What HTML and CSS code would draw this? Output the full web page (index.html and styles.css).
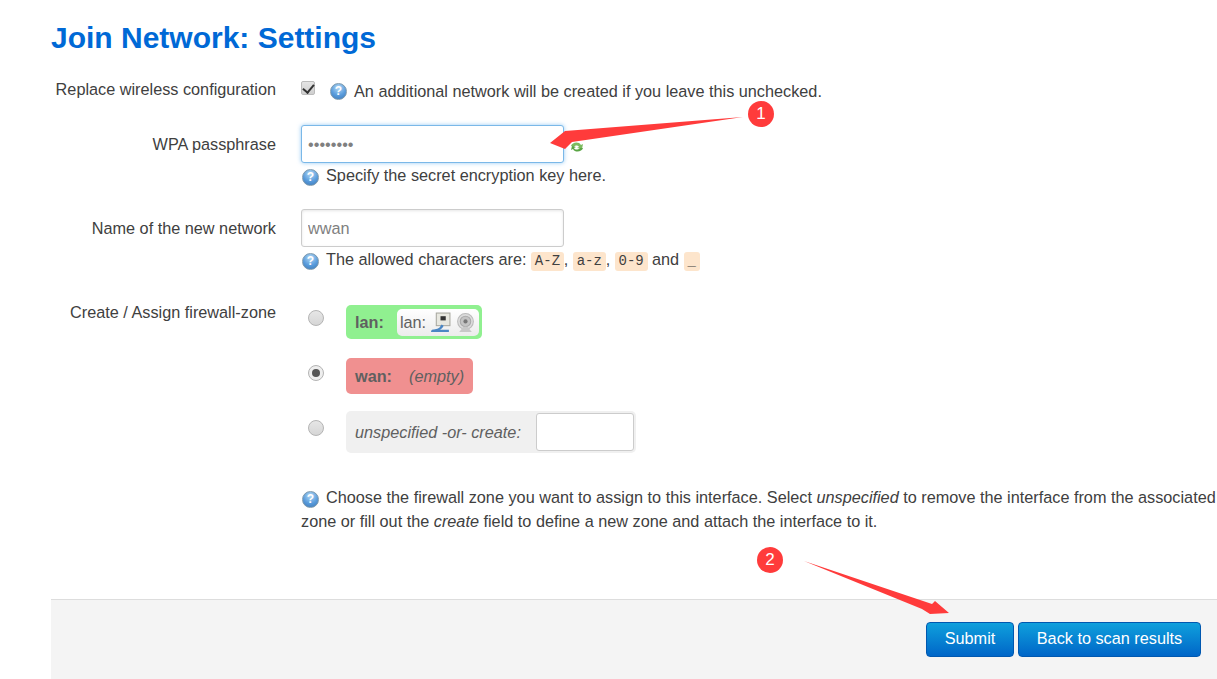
FILE: index.html
```html
<!DOCTYPE html>
<html lang="en">

<head>
    <meta charset="UTF-8">
    <title>Join Network: Settings</title>
    <link rel="stylesheet" href="styles.css">
</head>

<body>
    <div class="page">
        <h1>Join Network: Settings</h1>

        <div class="row row-replace">
            <label>Replace wireless configuration</label>
            <div class="field">
                <div class="inline-help">
                    <span class="checkbox"></span>
                    <span class="help-icon help-gap">?</span>
                    An additional network will be created if you leave this unchecked.
                </div>
            </div>
        </div>

        <div class="row row-pass">
            <label class="label-input">WPA passphrase</label>
            <div class="field">
                <div class="input-line">
                    <input class="text-input focused" type="text" value="••••••••">
                    <!-- reload icon, mostly behind the arrow -->
                    <svg class="reload" viewBox="0 0 14 12">
                        <path d="M1 5c1-4 8-5 10-1l2-1-1 5-5-1 2-1C8 4 5 4 4 6z" fill="#7dbb5f"/>
                        <path d="M13 7c-1 4-8 5-10 1l-2 1 1-4 4 1-2 1c1 2 4 2 6 0z" fill="#5aa544"/>
                    </svg>
                </div>
                <div class="help"><span class="help-icon">?</span>Specify the secret encryption key here.</div>
            </div>
        </div>

        <div class="row row-name">
            <label class="label-input">Name of the new network</label>
            <div class="field">
                <input class="text-input" type="text" value="wwan">
                <div class="help"><span class="help-icon">?</span>The allowed characters are: <code>A-Z</code>, <code>a-z</code>, <code>0-9</code> and <code>_</code></div>
            </div>
        </div>

        <div class="row row-zone">
            <label>Create / Assign firewall-zone</label>
            <div class="field zone-field">
                <div class="zone-line">
                    <span class="radio"></span>
                    <div class="zone zone-lan">
                        <strong>lan:</strong>
                        <span class="iface">lan:
                            <svg class="iface-icon" viewBox="0 0 20 20">
                                <rect x="6" y="1" width="13" height="12" fill="#e8e8e0" stroke="#a8a8a0"/>
                                <rect x="10" y="4" width="5" height="4" fill="#333"/>
                                <path d="M1 19c0-3 3-2 6-3 3-1 3-3 4-4l2 1c-1 2-2 3-4 4l9 0v2z" fill="#4a86c4"/>
                            </svg>
                            <svg class="iface-icon" viewBox="0 0 20 20">
                                <circle cx="10" cy="9" r="7.500" fill="#dcdcdc" stroke="#bbb"/>
                                <circle cx="10" cy="9" r="5" fill="#c4c4c4" stroke="#aaa"/>
                                <circle cx="10" cy="9" r="2" fill="#777"/>
                                <path d="M4 19l4-5h4l4 5z" fill="#c8c8c8"/>
                            </svg>
                        </span>
                    </div>
                </div>
                <div class="zone-line">
                    <span class="radio radio-on"></span>
                    <div class="zone zone-wan">
                        <strong>wan:</strong>
                        <em>(empty)</em>
                    </div>
                </div>
                <div class="zone-line zone-line-new">
                    <span class="radio radio-new"></span>
                    <div class="zone zone-new">
                        <em>unspecified -or- create:</em>
                        <input class="zone-input" type="text">
                    </div>
                </div>
                <div class="help zone-help"><span class="help-icon">?</span>Choose the firewall zone you want to assign to this interface. Select <em>unspecified</em> to remove the interface from the associated zone or fill out the <em>create</em> field to define a new zone and attach the interface to it.</div>
            </div>
        </div>

        <div class="actions">
            <button class="btn btn-submit">Submit</button>
            <button class="btn btn-back">Back to scan results</button>
        </div>
    </div>

    <!-- red annotations drawn on top of the screenshot -->
    <svg class="arrows" viewBox="0 0 1217 679">
        <polygon points="743,117 572,142 565,149 550,143 565,131"/>
        <polygon points="804,561 932,604 935,601 949,613 930,614 922,609"/>
    </svg>
    <div class="badge badge-one">1</div>
    <div class="badge badge-two">2</div>
</body>

</html>
```

FILE: styles.css
```css
* {
    margin: 0;
    padding: 0;
    box-sizing: border-box;
}

html,
body {
    height: 100%;
    overflow: hidden;
}

body {
    font-family: "Liberation Sans", Arial, sans-serif;
    font-size: 16.250px;
    line-height: 24px;
    color: #404040;
    background: #fff;
}

.page {
    padding-left: 51px;
}

h1 {
    font-size: 30px;
    line-height: 36px;
    font-weight: bold;
    color: #0069d6;
    padding-top: 20px;
    margin-bottom: 21px;
}

/* Form rows */
.row {
    display: grid;
    grid-template-columns: 225px 1fr;
    column-gap: 25px;
}

.row label {
    text-align: right;
}

.row-replace {
    height: 48px;
}

.row-pass {
    margin-bottom: 22px;
}

.row-name {
    margin-bottom: 29px;
}

.row-zone {
    margin-bottom: 66px;
}

.label-input {
    padding-top: 7px;
}

.inline-help {
    display: flex;
    align-items: center;
    height: 24px;
    margin-top: 2px;
}

.help-icon {
    display: inline-block;
    width: 17px;
    height: 17px;
    margin: 0 7px 0 1px;
    font-size: 12px;
    font-weight: bold;
    line-height: 15px;
    text-align: center;
    color: #fff;
    background: radial-gradient(circle at 50% 25%, #b5daf5 0, #5a9cdc 55%, #3a78b8 100%);
    border: 1px solid #7d99ad;
    border-radius: 50%;
    flex: none;
}

.help-gap {
    margin-left: 15px;
    margin-right: 7px;
}

.checkbox {
    position: relative;
    width: 14px;
    height: 14px;
    margin-top: -6px;
    border-radius: 2px;
    background: linear-gradient(#e4e4e4, #cfcfcf);
    border: 1px solid #bbb;
    flex: none;
}

.checkbox::after {
    content: "";
    position: absolute;
    left: 3px;
    top: 0;
    width: 5px;
    height: 9px;
    border: solid #333;
    border-width: 0 2px 2px 0;
    transform: rotate(40deg);
}

.input-line {
    display: flex;
    align-items: flex-end;
}

.text-input {
    display: block;
    width: 263px;
    height: 38px;
    padding: 0 6px;
    font-family: "Liberation Sans", Arial, sans-serif;
    font-size: 16.250px;
    color: #808080;
    background: #fff;
    border: 1px solid #ccc;
    border-radius: 3px;
    box-shadow: inset 0 1px 3px rgba(0, 0, 0, 0.1);
    outline: none;
}

.focused {
    border-color: #7ab8e8;
    box-shadow: 0 0 4px rgba(82, 168, 236, 0.6);
}

.reload {
    width: 14px;
    height: 12px;
    margin-left: 6px;
    margin-bottom: 10px;
}

.help {
    height: 24px;
}

code {
    display: inline-block;
    height: 19px;
    padding: 0 3.800px;
    font-family: "Liberation Mono", monospace;
    font-size: 14px;
    line-height: 19px;
    background: #fde5cc;
    border-radius: 3px;
}

/* Firewall zones */
.zone-field {
    padding-top: 5px;
}

.zone-line {
    display: flex;
    align-items: flex-start;
    margin-bottom: 19px;
}

.zone-line-new {
    margin-top: -2px;
    margin-bottom: 0;
}

.radio {
    position: relative;
    width: 16px;
    height: 16px;
    margin: 5px 22px 0 7px;
    border: 1px solid #b4b4b4;
    border-radius: 50%;
    background: linear-gradient(#e6e6e6, #d6d6d6);
    flex: none;
}

.radio-on {
    margin-top: 7px;
    background: #eee;
}

.radio-new {
    margin-top: 9px;
}

.radio-on::after {
    content: "";
    position: absolute;
    left: 3px;
    top: 3px;
    width: 8px;
    height: 8px;
    border-radius: 50%;
    background: #555;
}

.zone {
    display: flex;
    align-items: center;
    padding: 0 3px 0 9px;
    border-radius: 5px;
    color: #606060;
    white-space: nowrap;
}

.zone-lan {
    width: 136px;
    height: 34px;
    background: #90f090;
}

.zone-wan {
    width: 127px;
    height: 36px;
    background: #f09090;
}

.zone-wan em {
    margin-left: 17px;
}

.zone-new {
    width: 290px;
    height: 42px;
    background: #f0f0f0;
}

.iface {
    display: flex;
    align-items: center;
    width: 83px;
    height: 27px;
    margin-left: 13px;
    padding-left: 3px;
    white-space: nowrap;
    background: linear-gradient(#fff, #ececec);
    border-radius: 5px;
}

.iface-icon {
    width: 21px;
    height: 21px;
    margin-left: 4px;
}

.zone-input {
    width: 98px;
    height: 38px;
    margin-left: 15px;
    border: 1px solid #ccc;
    border-radius: 3px;
    background: #fff;
    outline: none;
    flex: none;
}

.zone-help {
    height: 48px;
    margin-top: 32px;
}

/* Footer buttons */
.actions {
    display: flex;
    justify-content: flex-end;
    gap: 4px;
    height: 90px;
    padding: 22px 16px 0 0;
    background: #f4f4f4;
    border-top: 1px solid #ddd;
}

.btn {
    height: 35px;
    padding-bottom: 2px;
    font-family: "Liberation Sans", Arial, sans-serif;
    font-size: 16.250px;
    color: #fff;
    background: linear-gradient(#0fa0dc, #0066c8);
    border: 1px solid #0058b0;
    border-radius: 4px;
    cursor: pointer;
}

.btn-submit {
    width: 88px;
}

.btn-back {
    width: 183px;
}

/* Annotations */
.arrows {
    position: absolute;
    left: 0;
    top: 0;
    width: 1217px;
    height: 679px;
    fill: #ff3b3b;
}

.badge {
    position: absolute;
    width: 26px;
    height: 26px;
    line-height: 25px;
    text-align: center;
    font-size: 17px;
    color: #fff;
    background: #ff3b3b;
    border-radius: 50%;
}

.badge-one {
    left: 748px;
    top: 101px;
}

.badge-two {
    left: 757px;
    top: 547px;
}
```
